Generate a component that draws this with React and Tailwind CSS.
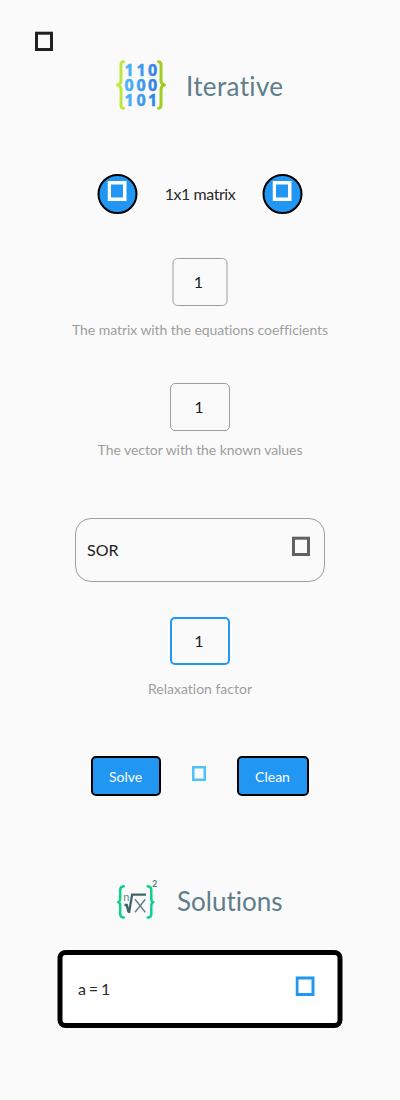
import React from "react";

function Box({ className, w = 18, h = 19.3, stroke = 3 }) {
  return (
    <svg width={20} height={20} viewBox="0 0 20 20" className={className} fill="none">
      <rect
        x={stroke / 2}
        y={20 - h + stroke / 2}
        width={w - stroke}
        height={h - stroke}
        stroke="currentColor"
        strokeWidth={stroke}
      />
    </svg>
  );
}

function MatrixLogo() {
  return (
    <svg width="50" height="50" viewBox="0 0 50 50" className="shrink-0">
      <defs>
        <linearGradient id="lime" x1="0" y1="0" x2="50" y2="0" gradientUnits="userSpaceOnUse">
          <stop offset="0" stopColor="#c3ea45" />
          <stop offset="1" stopColor="#9ccb20" />
        </linearGradient>
        <linearGradient id="blue" x1="8" y1="0" x2="42" y2="0" gradientUnits="userSpaceOnUse">
          <stop offset="0" stopColor="#4cb8ff" />
          <stop offset="1" stopColor="#347de0" />
        </linearGradient>
      </defs>
      <g fill="none" stroke="url(#lime)" strokeWidth="3" strokeLinecap="round" strokeLinejoin="round">
        <path d="M7.500 1.700Q5 1.800 5 5V20.500Q5 24 1.600 25Q5 26 5 29.500V45Q5 48.200 7.500 48.300" />
        <path d="M42.500 1.700Q45 1.800 45 5V20.500Q45 24 48.400 25Q45 26 45 29.500V45Q45 48.200 42.500 48.300" />
      </g>
      <g
        fill="url(#blue)"
        stroke="url(#blue)"
        strokeWidth="0.5"
        className="font-['Open_Sans'] text-[16px] font-bold"
        textAnchor="middle"
      >
        <text x="13.200 25 36.700" y="16.300">110</text>
        <text x="13.200 25 36.700" y="31">000</text>
        <text x="13.200 25 36.700" y="45.500">101</text>
      </g>
    </svg>
  );
}

function SolutionsLogo() {
  return (
    <svg width="42" height="44" viewBox="-0.5 -2 42 44" className="shrink-0">
      <g fill="none" stroke="#10d08c" strokeWidth="2.500" strokeLinecap="round" strokeLinejoin="round">
        <path d="M7.300 6.300Q3.700 6.500 3.700 10V19Q3.700 21.500 1.700 22.200Q3.700 23 3.700 25.500V34Q3.700 37.300 7.300 37.600" />
        <path d="M31.200 6.300Q34.800 6.500 34.800 10V19Q34.800 21.500 36.800 22.200Q34.800 23 34.800 25.500V34Q34.800 37.300 31.200 37.600" />
      </g>
      <g fill="none" stroke="#3e6468">
        <path d="M8 25H10.200L12.200 32" strokeWidth="2.600" />
        <path d="M12.500 33L15.600 14.600H29.500" strokeWidth="2.300" />
        <path d="M18.500 19.300L28.800 32.300M28.800 19.300L18.500 32.300" stroke="#618187" strokeWidth="1.400" />
      </g>
      <text x="6.800" y="20.500" className="font-['Lato'] text-[11px]" fill="#62858b">n</text>
      <text x="35.700" y="6.600" className="font-['Lato'] text-[8.5px] font-bold" fill="#55777e">2</text>
    </svg>
  );
}

function Field({ className }) {
  return (
    <div className={`flex h-12 items-center justify-center rounded-[5px] text-[16px] leading-5 text-[#1c1c1c] ${className}`}>
      <span className="-translate-x-[1.200px]">1</span>
    </div>
  );
}

function Caption({ children, className }) {
  return <div className={`h-5 whitespace-nowrap text-[14px] leading-5 text-[#9e9e9e] ${className}`}>{children}</div>;
}

function RoundButton() {
  return (
    <button className="flex size-10 items-start justify-center rounded-full border-2 border-black bg-[#2196f3] pl-px pt-[5px] text-white">
      <Box w={19} h={20} stroke={3.5} />
    </button>
  );
}

export default function App() {
  return (
    <main className="flex h-[1100px] w-[400px] flex-col items-center overflow-hidden bg-[#fafafa] font-['Lato',sans-serif] text-[#212121] [font-variant-ligatures:none]">
      <div className="h-[51px] w-full shrink-0 pl-[35px] pt-[31px]">
        <Box className="text-[#212121]" />
      </div>
      <header className="mt-[9px] flex h-[50px] w-[168px] items-center gap-5">
        <MatrixLogo />
        <h1 className="whitespace-nowrap pt-[2px] text-[26px] leading-8 tracking-[0.350px] text-[#607d8b]">Iterative</h1>
      </header>
      <div className="mt-[64px] flex h-10 w-[205px] -translate-x-[0.5px] items-center justify-between">
        <RoundButton />
        <span className="whitespace-nowrap pl-px text-[16px] leading-5 tracking-[-0.450px] text-[#2b2b2b]">1x1 matrix</span>
        <RoundButton />
      </div>
      <Field className="mt-[44px] w-[55px] -translate-x-[0.5px] border border-[#9e9e9e]" />
      <Caption className="mt-[14px] tracking-[-0.060px]">The matrix with the equations coefficients</Caption>
      <Field className="mt-[43px] w-[60px] border border-[#9e9e9e]" />
      <Caption className="mt-[9px] tracking-[-0.060px]">The vector with the known values</Caption>
      <div className="mt-[58px] flex h-16 w-[250px] items-center justify-between rounded-[16px] border border-[#9e9e9e] pl-[11px] pr-3">
        <span className="text-[16px] leading-5">SOR</span>
        <Box className="mb-[8px] text-[#616161]" />
      </div>
      <Field className="mt-[35px] w-[60px] border-2 border-[#2196f3]" />
      <Caption className="mt-[14px]">Relaxation factor</Caption>
      <div className="mt-[57px] flex h-10 w-[218px] items-center justify-between">
        <button className="h-10 w-[70px] rounded-[5px] border-2 border-black bg-[#2196f3] pr-px pt-[2px] text-[14px] leading-5 text-white">Solve</button>
        <svg width="14" height="15" viewBox="0 0 14 15" className="mb-[5px]" fill="none">
          <rect x="1.250" y="1.250" width="11.500" height="12.500" stroke="#4fc3f7" strokeWidth="2.500" />
        </svg>
        <button className="h-10 w-[72px] rounded-[5px] border-2 border-black bg-[#2196f3] pr-px pt-[2px] text-[14px] leading-5 text-white">Clean</button>
      </div>
      <div className="mt-[82px] flex h-[44px] w-[168px] items-center gap-[19px]">
        <SolutionsLogo />
        <h2 className="whitespace-nowrap pt-[2px] text-[26px] leading-8 text-[#607d8b]">Solutions</h2>
      </div>
      <div className="mt-[28px] flex h-[78px] w-[285px] -translate-x-[0.5px] items-center justify-between rounded-[8px] border-[5px] border-black bg-white pl-4 pr-[22px]">
        <span className="text-[16px] leading-5 tracking-[-0.600px] text-[#2b2b2b]">a = 1</span>
        <Box className="mb-[6px] text-[#2196f3]" w={19} h={19.5} />
      </div>
    </main>
  );
}
